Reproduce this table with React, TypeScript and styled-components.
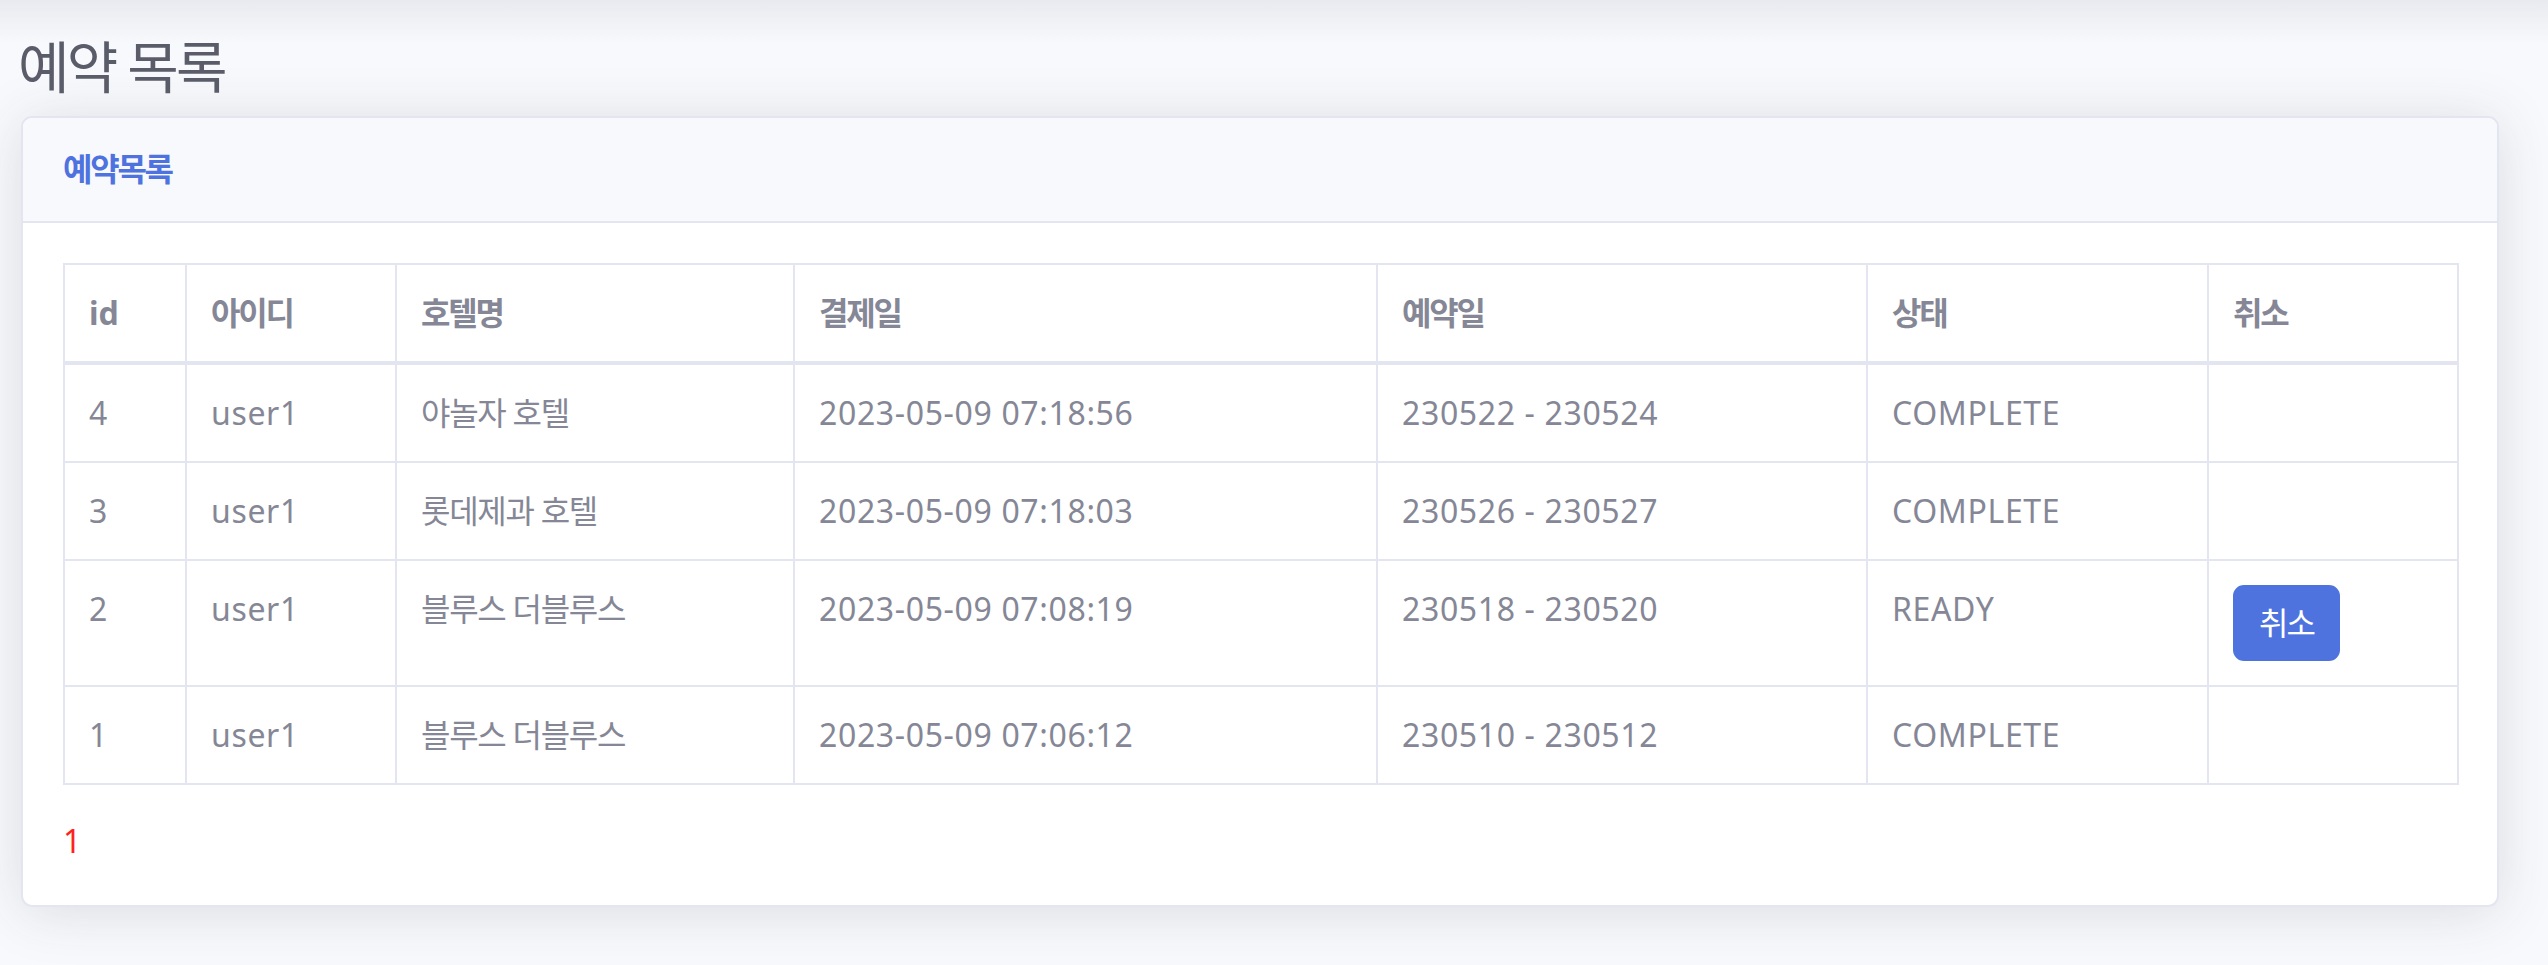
import * as React from "react";
import styled, { createGlobalStyle } from "styled-components";

const GlobalStyle = createGlobalStyle`
  body {
    margin: 0;
    background: #f8f9fc;
    color: #858796;
    font-family: "Noto Sans", "Noto Sans CJK KR", sans-serif;
  }
`;

const rows = [
  { id: 4, user: "user1", hotel: "야놀자 호텔", paid: "2023-05-09 07:18:56", stay: "230522 - 230524", status: "COMPLETE" },
  { id: 3, user: "user1", hotel: "롯데제과 호텔", paid: "2023-05-09 07:18:03", stay: "230526 - 230527", status: "COMPLETE" },
  { id: 2, user: "user1", hotel: "블루스 더블루스", paid: "2023-05-09 07:08:19", stay: "230518 - 230520", status: "READY" },
  { id: 1, user: "user1", hotel: "블루스 더블루스", paid: "2023-05-09 07:06:12", stay: "230510 - 230512", status: "COMPLETE" }
];

const columns = [
  { label: "id", width: 122, ko: false },
  { label: "아이디", width: 210, ko: true },
  { label: "호텔명", width: 398, ko: true },
  { label: "결제일", width: 583, ko: true },
  { label: "예약일", width: 490, ko: true },
  { label: "상태", width: 341, ko: true },
  { label: "취소", width: 250, ko: true }
];

export default function App() {
  return (
    <Page>
      <GlobalStyle />
      <Title>예약 목록</Title>
      <Card>
        <CardHeader>
          <HeaderTitle>예약목록</HeaderTitle>
        </CardHeader>
        <CardBody>
          <Table>
            <colgroup>
              {columns.map(c => (
                <col key={c.label} style={{ width: c.width }} />
              ))}
            </colgroup>
            <thead>
              <tr>
                {columns.map(c => (
                  <Th key={c.label} $ko={c.ko}>
                    {c.label}
                  </Th>
                ))}
              </tr>
            </thead>
            <tbody>
              {rows.map(r => (
                <tr key={r.id}>
                  <Td>{r.id}</Td>
                  <Td>{r.user}</Td>
                  <Td $ko>{r.hotel}</Td>
                  <Td>{r.paid}</Td>
                  <Td>{r.stay}</Td>
                  <Td>{r.status}</Td>
                  <Td>{r.status === "READY" && <CancelButton>취소</CancelButton>}</Td>
                </tr>
              ))}
            </tbody>
          </Table>
          <Pager>1</Pager>
        </CardBody>
      </Card>
    </Page>
  );
}

// css
const Page = styled.div`
  min-height: 100vh;
  box-sizing: border-box;
  padding: 33px 49px 40px 21px;
  background: linear-gradient(to bottom, #e9eaef 0, #f8f9fc 44px);
`;

const Title = styled.h3`
  margin: 0 0 16px -3px;
  font-size: 56px;
  line-height: 1.2;
  font-weight: 400;
  color: #5a5c69;
  letter-spacing: -0.05em;
`;

const Card = styled.div`
  background: #fff;
  border: 2px solid #e3e6f0;
  border-radius: 11px;
  box-shadow: 0 5px 56px 0 rgba(58, 59, 69, 0.15);
`;

const CardHeader = styled.div`
  padding: 32px 40px;
  background: #f8f9fc;
  border-bottom: 2px solid #e3e6f0;
  border-radius: 9px 9px 0 0;
`;

const HeaderTitle = styled.h6`
  margin: 0;
  font-size: 32px;
  line-height: 1.2;
  font-weight: 700;
  color: #4e73df;
  letter-spacing: -0.07em;
`;

const CardBody = styled.div`
  padding: 40px;
`;

const Table = styled.table`
  width: 100%;
  table-layout: fixed;
  border-collapse: collapse;
  margin-bottom: 32px;
  border: 2px solid #e3e6f0;
`;

const Th = styled.th<{ $ko?: boolean }>`
  border: 2px solid #e3e6f0;
  border-bottom-width: 4px;
  padding: 24px;
  text-align: left;
  vertical-align: bottom;
  font-size: 32px;
  line-height: 1.5;
  font-weight: 700;
  letter-spacing: ${p => (p.$ko ? "-0.07em" : "0")};
`;

const Td = styled.td<{ $ko?: boolean }>`
  border: 2px solid #e3e6f0;
  padding: 24px;
  vertical-align: top;
  font-size: 32px;
  line-height: 1.5;
  letter-spacing: ${p => (p.$ko ? "-0.04em" : "0.02em")};
`;

const CancelButton = styled.button`
  display: inline-block;
  padding: 12px 24px;
  border: 2px solid #4e73df;
  border-radius: 11px;
  background: #4e73df;
  color: #fff;
  font-family: inherit;
  font-size: 32px;
  line-height: 1.5;
  letter-spacing: -0.06em;
`;

const Pager = styled.div`
  color: #ff1f1f;
  font-size: 32px;
  line-height: 1.5;
`;
